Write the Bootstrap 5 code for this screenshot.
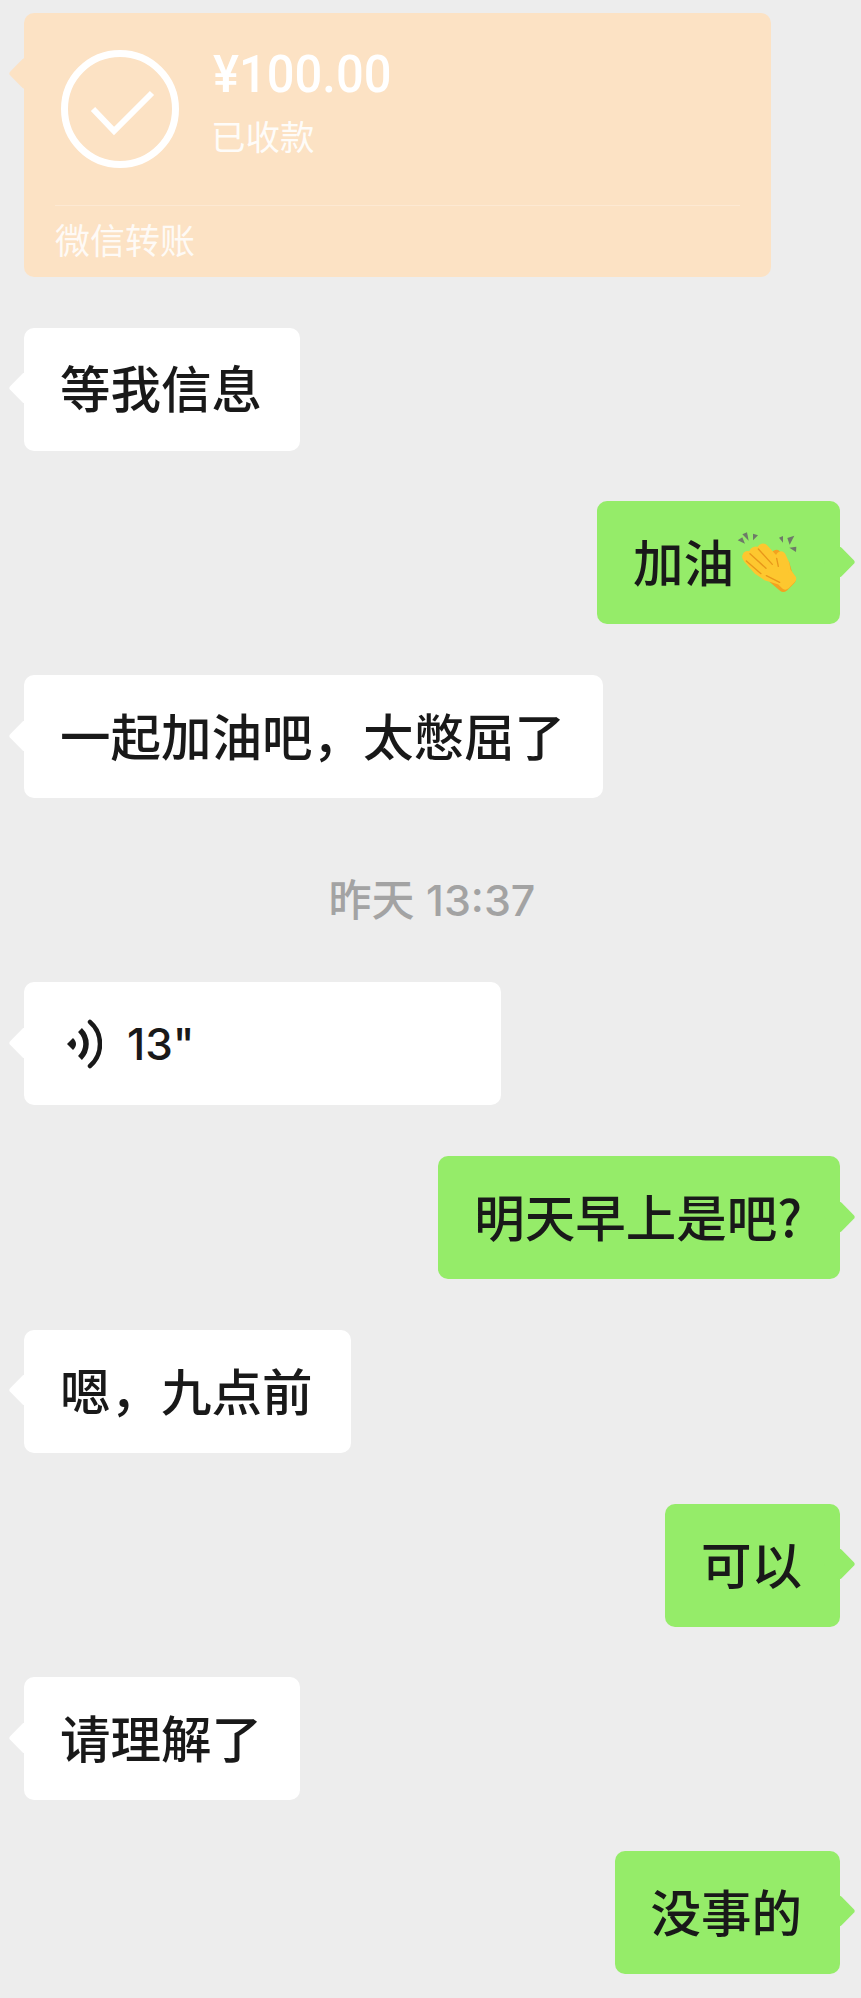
<!DOCTYPE html>
<html lang="zh">
<head>
<meta charset="utf-8">
<link href="https://cdn.jsdelivr.net/npm/bootstrap@5.3.0/dist/css/bootstrap.min.css" rel="stylesheet">
<style>
html,body{background:#ededed;margin:0}
body{font-family:"Noto Sans CJK SC",sans-serif;color:#191919}
.chat{padding:13px 21px 24px 24px;gap:50.7px}
.bubble{position:relative;border-radius:10px;height:123px;padding:0 38px 5px 36px;font-size:50.5px;font-weight:500;font-family:"Noto Sans CJK SC",sans-serif;line-height:1;white-space:nowrap}
.bubble::before{content:"";position:absolute;top:calc(50% - 1px);width:23px;height:23px;background:inherit;transform:translateY(-50%) rotate(45deg);border-radius:3px}
.them{align-self:flex-start;background:#fff}
.them::before{left:-11px}
.me{align-self:flex-end;background:#95ec69}
.me::before{right:-11px}
.pay{width:747px;height:264px;background:#fce2c4;border-radius:10px;position:relative;color:#fff;font-family:"Noto Sans CJK SC",sans-serif}
.pay::before{content:"";position:absolute;left:-11px;top:49px;width:23px;height:23px;background:inherit;transform:rotate(45deg);border-radius:3px}
.pay-top{height:192px;padding:37px 0 0 37px;gap:34px}
.amount{font-family:Roboto,sans-serif;font-size:52px;line-height:1;margin-top:-1px;font-weight:500;transform:scaleX(.94);transform-origin:left center}
.got{font-size:34.5px;line-height:1;margin:17px 0 0 -2px;opacity:.9}
.pay-line{margin:0 31px;height:1px;background:#fde9d3}
.pay-name{font-size:35px;line-height:1;padding:15px 0 0 31px;opacity:.85}
.stamp{color:#a3a3a3;font-size:43px;font-weight:500;line-height:1;text-align:center;font-family:Inter,"Noto Sans CJK SC",sans-serif;padding:30px 0 10px}
.voice{width:477px;padding-left:42px;padding-bottom:0;gap:25px}
.secs{font-family:Inter,sans-serif;font-size:44px;font-weight:500}
.clap{width:75px;height:75px;margin:4px -2px 0 -5px;flex:none}
</style>
</head>
<body>
<div class="chat d-flex flex-column">
  <div class="pay">
    <div class="pay-top d-flex">
      <svg width="118" height="118" viewBox="0 0 118 118" aria-hidden="true"><circle cx="59" cy="59" r="55.5" fill="none" stroke="#fff" stroke-width="7"/><path d="M32 59 L53 81 L91 43" fill="none" stroke="#fff" stroke-width="6"/></svg>
      <div>
        <div class="amount">¥100.00</div>
        <div class="got">已收款</div>
      </div>
    </div>
    <div class="pay-line"></div>
    <div class="pay-name">微信转账</div>
  </div>
  <div class="bubble them d-flex align-items-center">等我信息</div>
  <div class="bubble me d-flex align-items-center">加油<svg class="clap" viewBox="0 0 225 225" aria-hidden="true">
      <g fill="#6e7a68"><path d="M26 46l14-9 8 19z"/><path d="M40 28l14-6 5 25z"/><path d="M72 26l15 5-15 15z"/><path d="M150 38l12-5v20z"/><path d="M175 39l21-7-14 27z"/><path d="M181 68l21-3-1 16z"/></g>
      <path d="M130 85c4-8 14-10 20-4l28 32 8 28 10 16c3 6 1 12-4 17l-20 20c-6 5-12 5-17 1l-30-25z" fill="#f3a21f" stroke="#f3a21f" stroke-width="6"/>
      <path d="M44 92c2-9 12-13 20-8 0-11 14-20 24-13 3-12 17-16 25-6l30 33c2-14 14-20 22-10l12 26 4 22 15 20c3 5 2 9-2 13l-18 18c-5 4-10 4-14 0l-12-12-40-12-30-20-30-34c-6-7-8-12-6-17z" fill="#fdc72f" stroke="#fdc72f" stroke-width="8" stroke-linejoin="round"/>
      <g fill="none" stroke="#e8971a" stroke-width="4" stroke-linecap="round"><path d="M63 86l48 44"/><path d="M88 72l42 46"/><path d="M52 108l44 38"/><path d="M143 100l5 24"/><path d="M112 152l40 20"/></g>
    </svg></div>
  <div class="bubble them d-flex align-items-center">一起加油吧，太憋屈了</div>
  <div class="stamp">昨天 13:37</div>
  <div class="bubble them voice d-flex align-items-center">
    <svg width="36" height="50" viewBox="0 0 36 50" aria-hidden="true"><path d="M1 25l6-6c2 2 3 4 3 6s-1 4-3 6z" fill="#191919"/><path d="M14 11c4 4 6 9 6 14s-2 10-6 14" fill="none" stroke="#191919" stroke-width="5.5"/><path d="M24 3c7 6 10 14 10 22s-3 16-10 22" fill="none" stroke="#191919" stroke-width="4.5" stroke-linecap="round"/></svg>
    <span class="secs">13"</span>
  </div>
  <div class="bubble me d-flex align-items-center">明天早上是吧?</div>
  <div class="bubble them d-flex align-items-center">嗯，九点前</div>
  <div class="bubble me d-flex align-items-center">可以</div>
  <div class="bubble them d-flex align-items-center">请理解了</div>
  <div class="bubble me d-flex align-items-center">没事的</div>
</div>
<script src="https://cdn.jsdelivr.net/npm/bootstrap@5.3.0/dist/js/bootstrap.bundle.min.js"></script>
</body>
</html>
